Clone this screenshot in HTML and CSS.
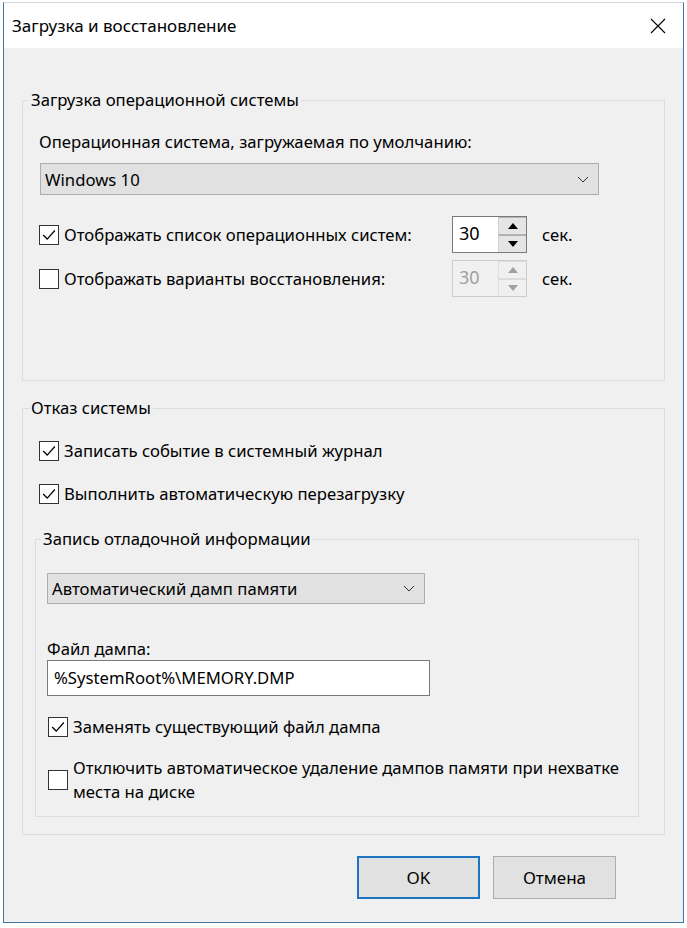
FILE: index.html
```html
<!DOCTYPE html>
<html lang="ru">
<head>
    <meta charset="UTF-8">
    <title>Загрузка и восстановление</title>
    <link rel="stylesheet" href="styles.css">
</head>
<body>
    <div class="window">
        <div class="titlebar">
            <span class="title">Загрузка и восстановление</span>
            <span class="close">
                <svg viewBox="0 0 16 16" width="16" height="16">
                    <path d="M1 1L15 15M15 1L1 15" stroke="#000" stroke-width="1.1" fill="none"/>
                </svg>
            </span>
        </div>

        <div class="content">
            <fieldset class="group group-boot">
                <legend>Загрузка операционной системы</legend>
                <div class="os-label">Операционная система, загружаемая по умолчанию:</div>
                <div class="select select-os">
                    <span>Windows 10</span>
                    <svg class="chevron" viewBox="0 0 12 7" width="12" height="7">
                        <path d="M1 1L6 6L11 1" stroke="#333" stroke-width="1" fill="none"/>
                    </svg>
                </div>

                <div class="spin-row first">
                    <span class="check checked"><svg viewBox="0 0 20 20" width="18" height="18"><path d="M3.5 10L8 14.5L16.5 5" stroke="#000" stroke-width="1.4" fill="none"/></svg></span>
                    <span class="spin-label">Отображать список операционных систем:</span>
                    <div class="spinner">
                        <span class="spin-value">30</span>
                        <div class="spin-btns">
                            <span class="spin-btn"><svg viewBox="0 0 10 6" width="10" height="6"><path d="M0 6L5 0L10 6Z" fill="#000"/></svg></span>
                            <span class="spin-btn"><svg viewBox="0 0 10 6" width="10" height="6"><path d="M0 0L5 6L10 0Z" fill="#000"/></svg></span>
                        </div>
                    </div>
                    <span class="unit">сек.</span>
                </div>

                <div class="spin-row">
                    <span class="check"></span>
                    <span class="spin-label">Отображать варианты восстановления:</span>
                    <div class="spinner disabled">
                        <span class="spin-value">30</span>
                        <div class="spin-btns">
                            <span class="spin-btn"><svg viewBox="0 0 10 6" width="10" height="6"><path d="M0 6L5 0L10 6Z" fill="#a0a0a0"/></svg></span>
                            <span class="spin-btn"><svg viewBox="0 0 10 6" width="10" height="6"><path d="M0 0L5 6L10 0Z" fill="#a0a0a0"/></svg></span>
                        </div>
                    </div>
                    <span class="unit">сек.</span>
                </div>
            </fieldset>

            <fieldset class="group group-fail">
                <legend>Отказ системы</legend>
                <div class="check-row first">
                    <span class="check checked"><svg viewBox="0 0 20 20" width="18" height="18"><path d="M3.5 10L8 14.5L16.5 5" stroke="#000" stroke-width="1.4" fill="none"/></svg></span>
                    <span>Записать событие в системный журнал</span>
                </div>
                <div class="check-row second">
                    <span class="check checked"><svg viewBox="0 0 20 20" width="18" height="18"><path d="M3.5 10L8 14.5L16.5 5" stroke="#000" stroke-width="1.4" fill="none"/></svg></span>
                    <span>Выполнить автоматическую перезагрузку</span>
                </div>

                <fieldset class="subgroup">
                    <legend>Запись отладочной информации</legend>
                    <div class="select select-dump">
                        <span>Автоматический дамп памяти</span>
                        <svg class="chevron" viewBox="0 0 12 7" width="12" height="7">
                            <path d="M1 1L6 6L11 1" stroke="#333" stroke-width="1" fill="none"/>
                        </svg>
                    </div>
                    <div class="file-label">Файл дампа:</div>
                    <div class="textbox">%SystemRoot%\MEMORY.DMP</div>
                    <div class="check-row replace">
                        <span class="check checked"><svg viewBox="0 0 20 20" width="18" height="18"><path d="M3.5 10L8 14.5L16.5 5" stroke="#000" stroke-width="1.4" fill="none"/></svg></span>
                        <span>Заменять существующий файл дампа</span>
                    </div>
                    <div class="check-row multi">
                        <span class="check"></span>
                        <span class="nowrap">Отключить автоматическое удаление дампов памяти при нехватке<br>места на диске</span>
                    </div>
                </fieldset>
            </fieldset>

            <div class="buttons">
                <button class="btn default">OK</button>
                <button class="btn">Отмена</button>
            </div>
        </div>
    </div>
</body>
</html>
```

FILE: styles.css
```css
body {
    margin: 0;
    background: #fff;
    color: #000;
    font-family: 'Noto Sans', 'Open Sans', sans-serif;
    font-size: 16.7px;
}

.window {
    margin: 2px 0 0 3px;
    width: 679px;
    height: 919px;
    border: 1px solid #3f77a3;
    border-top-color: #cdd6de;
    background: #f0f0f0;
}

.titlebar {
    height: 45px;
    background: #fff;
    display: flex;
    align-items: center;
    justify-content: space-between;
    padding: 0 17px 0 8px;
}

.title {
    font-size: 17px;
}

.close {
    display: flex;
    width: 16px;
    height: 16px;
}

.content {
    padding: 42px 18px 0 18px;
}

/* рамки групп */
.group, .subgroup {
    margin: 0;
    padding: 0 16px;
    border: 1px solid #dcdcdc;
    min-width: 0;
}

.group legend {
    margin-left: -10px;
    padding: 0 2px;
    line-height: 20px;
}

.group-boot {
    padding-bottom: 83px;
}

.group-fail {
    margin-top: 17px;
    padding-bottom: 17px;
}

.os-label {
    margin-top: 21px;
    line-height: 22px;
}

.select {
    display: flex;
    align-items: center;
    justify-content: space-between;
    box-sizing: border-box;
    background: #e1e1e1;
    border: 1px solid #adadad;
    padding: 0 8px 0 4px;
}

.select-os {
    margin: 10px 0 0 1px;
    width: 559px;
    height: 32px;
}

.select-dump {
    margin-top: 24px;
    width: 378px;
    height: 31px;
}

.chevron {
    margin-right: 1px;
}

.check {
    display: flex;
    align-items: center;
    justify-content: center;
    flex: none;
    box-sizing: border-box;
    width: 20px;
    height: 20px;
    background: #fff;
    border: 1px solid #333;
}

.spin-row {
    display: flex;
    align-items: center;
    height: 37px;
    margin-top: 7px;
}

.spin-row.first {
    margin-top: 21px;
}

.spin-label {
    width: 388px;
    margin-left: 5px;
}

.spinner {
    display: flex;
    box-sizing: border-box;
    width: 75px;
    height: 37px;
    background: #fff;
    border: 1px solid #7a7a7a;
}

.spin-value {
    flex: 1;
    padding: 4px 0 0 6px;
    font-size: 18px;
}

.spin-btns {
    display: flex;
    flex-direction: column;
    width: 27px;
    border-left: 1px solid #d0d0d0;
}

.spin-btn {
    flex: 1;
    display: flex;
    align-items: center;
    justify-content: center;
    background: #e5e5e5;
    border: 1px solid #b5b5b5;
    border-left: none;
    border-right: none;
}

.spin-btn + .spin-btn {
    border-top: 1px solid #adadad;
    border-bottom: none;
}

.spinner.disabled {
    border-color: #cccccc;
    background: #f0f0f0;
    color: #a0a0a0;
}

.spinner.disabled .spin-btns {
    border-left-color: #e0e0e0;
}

.spinner.disabled .spin-btn {
    background: #f0f0f0;
    border-color: #dcdcdc;
}

.unit {
    margin-left: 15px;
}

.check-row {
    display: flex;
    align-items: center;
    gap: 5px;
    line-height: 24px;
}

.check-row.first {
    margin-top: 21px;
}

.check-row.second {
    margin-top: 19px;
}

.nowrap {
    white-space: nowrap;
}

.subgroup {
    margin: 23px 0 0 -4px;
    width: 604px;
    box-sizing: border-box;
    padding: 0 11px 12px 11px;
}

.subgroup legend {
    margin-left: -6px;
}

.file-label {
    margin-top: 34px;
    line-height: 22px;
}

.textbox {
    box-sizing: border-box;
    width: 383px;
    height: 36px;
    background: #fff;
    border: 1px solid #7a7a7a;
    padding: 0 6px;
    line-height: 34px;
}

.check-row.replace {
    margin: 19px 0 0 1px;
}

.check-row.multi {
    margin: 17px 0 0 1px;
}

.buttons {
    display: flex;
    justify-content: flex-end;
    gap: 13px;
    margin-top: 21px;
    padding-right: 49px;
}

.btn {
    box-sizing: border-box;
    width: 123px;
    height: 43px;
    background: #e1e1e1;
    border: 1px solid #adadad;
    font-family: inherit;
    font-size: 17px;
    color: #000;
}

.btn.default {
    border: 2px solid #1d74c0;
}
```
